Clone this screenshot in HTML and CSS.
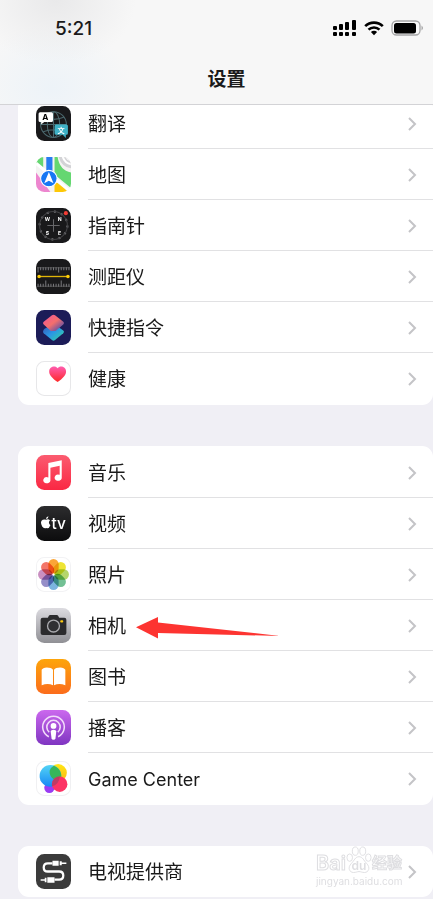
FILE: index.html
```html
<!DOCTYPE html>
<html lang="zh-CN">
<head>
<meta charset="utf-8">
<meta name="viewport" content="width=device-width, initial-scale=1">
<title>设置</title>
<link rel="stylesheet" href="styles.css">
</head>
<body>
<svg class="defs" aria-hidden="true">
  <defs>
    <linearGradient id="g-music" x2="0" y2="1"><stop stop-color="#fb5c70"/><stop offset="1" stop-color="#fa2743"/></linearGradient>
    <linearGradient id="g-dark" x2="0" y2="1"><stop stop-color="#2c2c2e"/><stop offset="1" stop-color="#0c0c0d"/></linearGradient>
    <linearGradient id="g-cam" x2="0" y2="1"><stop stop-color="#dcdbe0"/><stop offset="1" stop-color="#909095"/></linearGradient>
    <linearGradient id="g-books" x2="0" y2="1"><stop stop-color="#fda50b"/><stop offset="1" stop-color="#fb6c1c"/></linearGradient>
    <linearGradient id="g-pod" x2="0" y2="1"><stop stop-color="#cb68ee"/><stop offset="1" stop-color="#7f35c1"/></linearGradient>
    <linearGradient id="g-heart" x2="0" y2="1"><stop stop-color="#ff5cae"/><stop offset="1" stop-color="#fd2827"/></linearGradient>
    <linearGradient id="g-s1" x2="1" y2="1"><stop stop-color="#f2529d"/><stop offset=".5" stop-color="#f56f6c"/><stop offset=".75" stop-color="#8d5a94"/><stop offset="1" stop-color="#3d5fae"/></linearGradient>
    <linearGradient id="g-s2" x2="1" y2="1"><stop stop-color="#3a4fae"/><stop offset=".5" stop-color="#2a97e6"/><stop offset="1" stop-color="#35dc98"/></linearGradient>
    <linearGradient id="g-blue" x2="0" y2="1"><stop stop-color="#53d3f5"/><stop offset="1" stop-color="#1788f5"/></linearGradient>
    <linearGradient id="g-yellow" x2="0" y2="1"><stop stop-color="#ffe715"/><stop offset="1" stop-color="#fbb615"/></linearGradient>
    <clipPath id="tile"><rect width="34" height="34" rx="8"/></clipPath>
    <symbol id="chevron" viewBox="0 0 10 16"><path d="M2 2l6 6-6 6" fill="none" stroke="#c4c4c7" stroke-width="2"/></symbol>
  </defs>
</svg>

<header class="header">
  <div class="status">
    <time class="clock">5:21</time>
    <div class="indicators">
      <svg width="24" height="18" viewBox="0 0 24 18" role="img" aria-label="信号">
        <g fill="#000"><rect y="7" width="4" height="4" rx="1"/><rect x="6" y="5" width="4" height="6" rx="1"/><rect x="12" y="3" width="4" height="8" rx="1"/><rect x="19" y="1" width="4" height="10" rx="1"/><rect y="13" width="4" height="4" rx="1"/><rect x="6" y="13" width="4" height="4" rx="1"/><rect x="12" y="13" width="4" height="4" rx="1"/><rect x="19" y="13" width="4" height="4" rx="1"/></g>
      </svg>
      <svg width="20" height="18" viewBox="0 0 20 18" role="img" aria-label="无线网络">
        <g fill="none" stroke="#000" stroke-width="2.6"><path d="M1.2 7.2a12.5 12.5 0 0 1 17.6 0"/><path d="M4.5 10.7a7.8 7.8 0 0 1 11 0"/></g><path d="M6.9 13.1a4.4 4.4 0 0 1 6.2 0L10 16.3z"/>
      </svg>
      <svg width="33" height="18" viewBox="0 0 33 18" role="img" aria-label="电池">
        <rect x="1" y="2" width="28" height="14" rx="4.5" fill="#fafafa" stroke="#a5a5a6" stroke-width="1.3"/><rect x="3" y="4" width="22" height="10.5" rx="2.5"/><path d="M30.5 6.5q3 2.5 0 5z" fill="#a5a5a6"/>
      </svg>
    </div>
  </div>
  <h1 class="title">设置</h1>
</header>

<main class="settings">
  <section class="group group--first">
    <a class="row" href="#translate">
      <svg class="icon" viewBox="0 0 34 34"><g clip-path="url(#tile)"><rect width="34" height="34" fill="#19191b"/>
        <g fill="none" stroke="#4b686e"><circle cx="17" cy="18" r="12.5"/><ellipse cx="17" cy="18" rx="6" ry="12.5"/><path d="M17 5.500v25M4.500 18h25M7 11q10 4 20 0M7 25q10-4 20 0"/></g>
        <path d="M4 6h11q1.500 0 1.500 1.500V14q0 1.500-1.500 1.500H8L5 18v-2.500H4Q2.500 15.500 2.500 14V7.500Q2.500 6 4 6z" fill="#fff"/>
        <path d="M19.500 18h10q1.500 0 1.500 1.500v7q0 1.500-1.500 1.500H29v3l-3-3h-6.500Q18 28 18 26.500v-7q0-1.500 1.500-1.500z" fill="#3fb1c6"/>
        <text x="9" y="14" class="glyph-a">A</text><text x="24.500" y="26" class="glyph-w">文</text></g></svg>
      <span class="label">翻译</span><svg class="chevron"><use href="#chevron"/></svg></a>
    <a class="row" href="#maps">
      <svg class="icon" viewBox="0 0 34 34"><g clip-path="url(#tile)"><rect width="34" height="34" fill="#f4f3f2"/>
        <path d="M0 0h7v11L0 5z" fill="#65d771"/><path d="M18 0h3q2 13 13 15v15L18 17z" fill="#65d771"/>
        <path d="M22 0q3 10 12 11V0z" fill="#d3d3d6"/><path d="M26 0q2 6 8 7M30 0q1 3 4 3" fill="none" stroke="#fff" stroke-width="2"/>
        <path d="M0 15l14 19H0z" fill="#ed86cf"/><path d="M18 34v-8l5-2 8 10z" fill="#fdc807"/><path d="M0 6l34 28" stroke="#fff" stroke-width="3"/>
        <rect x="10" width="6" height="17" fill="#287cf1"/><circle cx="12.500" cy="21" r="8" fill="#1677f3" stroke="#fff"/><path d="M12.500 14.500l4.500 11-4.500-2.500L8 25.500z" fill="#fff"/></g></svg>
      <span class="label">地图</span><svg class="chevron"><use href="#chevron"/></svg></a>
    <a class="row" href="#compass">
      <svg class="icon" viewBox="0 0 34 34"><rect width="34" height="34" rx="8" fill="#19191b"/>
        <circle cx="17" cy="17" r="13.500" fill="none" stroke="#77777a" stroke-width="2" stroke-dasharray="2 5.070"/><circle cx="17" cy="17" r="13.500" fill="none" stroke="#424245"/>
        <path d="M17 11v12M11 17h12" stroke="#666669"/><circle cx="29" cy="5" r="2" fill="#f43d35"/>
        <g class="compass"><text x="11" y="13">W</text><text x="23" y="13">N</text><text x="11" y="26">S</text><text x="23" y="26">E</text></g></svg>
      <span class="label">指南针</span><svg class="chevron"><use href="#chevron"/></svg></a>
    <a class="row" href="#measure">
      <svg class="icon" viewBox="0 0 34 34"><rect width="34" height="34" rx="8" fill="#19191b"/>
        <path d="M1 8.500h32M1 26.500h32" stroke="#4d4d4f"/><path d="M2 8v5M4.500 8v3M7 8v3M9.500 8v3M12 8v3M14.500 8v3M17 8v3M19.500 8v3M22 8v5M24.500 8v3M27 8v3M29.500 8v3M32 8v3M2 27v-3M4.500 27v-3M7 27v-3M9.500 27v-6M12 27v-3M14.500 27v-3M17 27v-3M19.500 27v-3M22 27v-3M24.500 27v-6M27 27v-3M29.500 27v-3M32 27v-3" stroke="#77777a"/>
        <path d="M2 17h30" stroke="#dfb407" stroke-width="1.300"/><circle cx="3" cy="17" r="1.700" fill="#ffcf08"/><circle cx="31" cy="17" r="1.700" fill="#ffcf08"/></svg>
      <span class="label">测距仪</span><svg class="chevron"><use href="#chevron"/></svg></a>
    <a class="row" href="#shortcuts">
      <svg class="icon" viewBox="0 0 34 34"><rect width="34" height="34" rx="8" fill="#1c1c58"/>
        <path d="M8 18.500L17 13l9.500 7q1.500 1.300 0 2.600l-8 6.600q-1.500 1.200-3 0l-8-6.600q-1.500-1.300.5-4.100z" fill="url(#g-s2)"/>
        <path d="M15.500 5q1.500-1 3 0l8 6.500q1.500 1.300 0 2.600L19 20.300l-4.500 0-7-6.200q-1.500-1.300 0-2.600z" fill="url(#g-s1)"/></svg>
      <span class="label">快捷指令</span><svg class="chevron"><use href="#chevron"/></svg></a>
    <a class="row" href="#health">
      <svg class="icon" viewBox="0 0 34 34"><rect x=".5" y=".5" width="33" height="33" rx="7.500" fill="#fff" stroke="#e7e7e9"/>
        <path d="M21 20.500C16 17 12.800 14 12.800 10.300c0-5 6-6.200 8.200-3.300 2.200-2.900 8.200-1.700 8.200 3.300 0 3.700-3.200 6.700-8.200 10.200z" fill="url(#g-heart)"/></svg>
      <span class="label">健康</span><svg class="chevron"><use href="#chevron"/></svg></a>
  </section>

  <section class="group">
    <a class="row" href="#music">
      <svg class="icon" viewBox="0 0 34 34"><rect width="34" height="34" rx="8" fill="url(#g-music)"/>
        <path d="M12 7.700l13-2.600V22.500a3.500 3 0 1 1-2-3.200V10.500l-9 1.900V25a3.500 3 0 1 1-2-3.200z" fill="#fff"/></svg>
      <span class="label">音乐</span><svg class="chevron"><use href="#chevron"/></svg></a>
    <a class="row" href="#video">
      <svg class="icon" viewBox="0 0 34 34"><rect width="34" height="34" rx="8" fill="url(#g-dark)"/>
        <path d="M10 13.400q1.800-1 3.600.4-2.300 2.200.4 4.800-1.500 3.800-4 2.700-2.400 1-4-1.400-2.600-5 .6-6.500 1.600-.7 3.400 0zM9.700 12.800q0-2.500 2.400-2.900 0 2.300-2.400 2.900z" fill="#fff"/><text x="15" y="22" class="tv">tv</text></svg>
      <span class="label">视频</span><svg class="chevron"><use href="#chevron"/></svg></a>
    <a class="row" href="#photos">
      <svg class="icon" viewBox="0 0 34 34"><rect x=".5" y=".5" width="33" height="33" rx="7.500" fill="#fff" stroke="#f2f2f4"/>
        <g class="petals"><rect x="12" y="2" width="10" height="14" rx="5" fill="#fa9c22"/><rect x="12" y="2" width="10" height="14" rx="5" fill="#ede11d" transform="rotate(45 17 17)"/><rect x="12" y="2" width="10" height="14" rx="5" fill="#add25b" transform="rotate(90 17 17)"/><rect x="12" y="2" width="10" height="14" rx="5" fill="#62b988" transform="rotate(135 17 17)"/><rect x="12" y="2" width="10" height="14" rx="5" fill="#6eaddc" transform="rotate(180 17 17)"/><rect x="12" y="2" width="10" height="14" rx="5" fill="#8a82c2" transform="rotate(225 17 17)"/><rect x="12" y="2" width="10" height="14" rx="5" fill="#c383ba" transform="rotate(270 17 17)"/><rect x="12" y="2" width="10" height="14" rx="5" fill="#f26758" transform="rotate(315 17 17)"/></g></svg>
      <span class="label">照片</span><svg class="chevron"><use href="#chevron"/></svg></a>
    <a class="row" href="#camera">
      <svg class="icon" viewBox="0 0 34 34"><rect width="34" height="34" rx="8" fill="url(#g-cam)"/>
        <path d="M6.500 9.500h5l1-2q.4-.8 1.300-.8h6.400q.9 0 1.300.8l1 2h5q2 0 2 2v12.700q0 2-2 2h-21q-2 0-2-2V11.500q0-2 2-2z" fill="#2b2b2d"/>
        <circle cx="17" cy="17.500" r="5.800" fill="#303033" stroke="#aaaaae" stroke-width="1.300"/><rect x="23.500" y="12" width="3" height="2" rx="1" fill="#ffcc10"/></svg>
      <span class="label">相机</span>
      <svg class="pointer" viewBox="0 0 144 22" aria-hidden="true"><path d="M0 10.300L22 0v5.500L144 19 22 16v5.500z" fill="#fd3431"/></svg>
      <svg class="chevron"><use href="#chevron"/></svg></a>
    <a class="row" href="#books">
      <svg class="icon" viewBox="0 0 34 34"><rect width="34" height="34" rx="8" fill="url(#g-books)"/>
        <path d="M16.500 10.500v15q-5-2.500-11 0V10.500q1-2 5-2.300 4.500 0 6 2.300zM17.500 10.500v15q5-2.500 11 0V10.500q-1-2-5-2.300-4.500 0-6 2.300z" fill="#fff"/></svg>
      <span class="label">图书</span><svg class="chevron"><use href="#chevron"/></svg></a>
    <a class="row" href="#podcasts">
      <svg class="icon" viewBox="0 0 34 34"><rect width="34" height="34" rx="8" fill="url(#g-pod)"/>
        <g fill="none" stroke="#f2dcfa" stroke-width="1.500"><path d="M12.500 26a10.500 10.500 0 1 1 9 0M12.800 21.500a6.500 6.500 0 1 1 8.400 0"/></g><circle cx="17" cy="15.500" r="2.800" fill="#fff"/><path d="M14.300 21q0-1.800 2.700-1.800t2.700 1.800l-.8 6.500q-.2 1.500-1.900 1.500t-1.900-1.500z" fill="#fff"/></svg>
      <span class="label">播客</span><svg class="chevron"><use href="#chevron"/></svg></a>
    <a class="row" href="#gamecenter">
      <svg class="icon" viewBox="0 0 34 34"><rect x=".5" y=".5" width="33" height="33" rx="7.500" fill="#fff" stroke="#f0f0f2"/>
        <circle cx="13" cy="26" r="5" fill="#9a3cf3"/><circle cx="21.500" cy="11.500" r="8.500" fill="url(#g-yellow)"/><circle cx="14" cy="14.500" r="10.500" fill="url(#g-blue)"/>
        <path d="M13.300 9.200a8.500 8.500 0 0 0 10.300 9.500A10.500 10.500 0 0 0 17.300 4.500a8.500 8.500 0 0 0-4 4.700z" fill="#36b65b"/><circle cx="23" cy="22.500" r="7.500" fill="#fc3364"/><path d="M15.500 22.500a7.500 7.500 0 0 1 7.800-7.500q-1.300 8.500-7.800 9.600z" fill="#bd3b64"/></svg>
      <span class="label label--latin">Game Center</span><svg class="chevron"><use href="#chevron"/></svg></a>
  </section>

  <section class="group group--single">
    <a class="row" href="#tvprovider">
      <svg class="icon" viewBox="0 0 34 34"><rect width="34" height="34" rx="8" fill="#3b3b3b"/>
        <path d="M16 9h-4.500q-4 0-4 4t4 4h11q4 0 4 4t-4 4H18" fill="none" stroke="#fff" stroke-width="2.200"/>
        <path d="M16 6.500h6v5h-6zM23 7h2v4h-2zM25 8.300h4.500v1.400H25zM11 22.500h7v5.500h-7zM8.500 23h1.700v4.500H8.500zM4.500 24.500h4V26h-4z" fill="#fff"/></svg>
      <span class="label">电视提供商</span><svg class="chevron"><use href="#chevron"/></svg></a>
    <div class="watermark">
      <div class="watermark-brand"><span>Bai</span><svg class="paw" viewBox="0 0 28 30"><g fill="#fff" stroke="#dedee1"><ellipse cx="4" cy="13" rx="3" ry="4"/><ellipse cx="10" cy="6" rx="3.200" ry="4.500"/><ellipse cx="18" cy="6" rx="3.200" ry="4.500"/><ellipse cx="24" cy="13" rx="3" ry="4"/><path d="M14 12c4 0 5 4 8 7 5 5 2 10-2 10-3 0-4-1-6-1s-3 1-6 1c-4 0-7-5-2-10 3-3 4-7 8-7z"/></g><text x="14" y="26">du</text></svg><span class="watermark-cn">经验</span></div>
      <div class="watermark-url">jingyan.baidu.com</div>
    </div>
  </section>
</main>
</body>
</html>
```
FILE: styles.css
```css
* {
  box-sizing: border-box;
}

body {
  margin: 0;
  background: #f0eff5;
  color: #1a1a1a;
  font-family: Inter, "Noto Sans CJK SC", sans-serif;
  overflow-x: hidden;
}

.defs {
  position: absolute;
  width: 0;
  height: 0;
}

.header {
  position: sticky;
  top: 0;
  z-index: 2;
  height: 105px;
  padding-top: 16px;
  border-bottom: 1px solid #d3d3d6;
  background:
    radial-gradient(ellipse 80px 64px at 56px 0, #e9e9ea, transparent),
    radial-gradient(ellipse 80px 64px at 52px 88px, #edf3f8, transparent),
    #f7f7f7;
}

.status {
  display: flex;
  align-items: center;
  justify-content: space-between;
  height: 24px;
  padding: 0 9px 0 55px;
}

.clock {
  font-size: 19px;
  font-weight: 500;
}

.indicators {
  display: flex;
  gap: 7px;
}

.title {
  margin: 26px 0 0;
  padding-left: 20px;
  font-size: 19px;
  line-height: 28px;
  font-weight: 700;
  text-align: center;
}

.settings {
  display: flex;
  flex-direction: column;
  gap: 41px;
  margin-top: -8px;
}

.group {
  position: relative;
  margin-left: 18px;
  padding: 1px 0;
  border-radius: 11px;
  background: #fff;
}

.group--single {
  padding: 0;
  margin-bottom: 2px;
}

.row {
  display: flex;
  align-items: center;
  height: 51px;
  padding: 0 16px 0 18px;
  color: inherit;
  text-decoration: none;
  background: linear-gradient(#e1e1e3, #e1e1e3) 70px 100% / 100% 1px no-repeat;
}

.row:last-of-type {
  background: none;
}

.icon {
  width: 35px;
  height: 35px;
  flex: none;
}

.label {
  margin-left: 17px;
  padding-top: 2px;
  font-size: 19px;
  line-height: 26px;
}

.label--latin {
  font-size: 18px;
}

.chevron {
  width: 10px;
  height: 16px;
  margin-left: auto;
}

.pointer {
  width: 144px;
  height: 22px;
  margin: 4px 0 0 10px;
}

.glyph-a,
.glyph-w,
.compass {
  text-anchor: middle;
  font-weight: 700;
}

.glyph-a {
  font-size: 8px;
}

.glyph-w {
  font-size: 7px;
  fill: #fff;
}

.compass {
  font-size: 5px;
  fill: #fff;
}

.tv {
  font-size: 15px;
  font-weight: 500;
  fill: #fff;
}

.petals {
  mix-blend-mode: multiply;
}

.petals rect {
  mix-blend-mode: multiply;
  opacity: 0.9;
}

.watermark {
  position: absolute;
  right: 27px;
  bottom: 9px;
  width: 90px;
}

.watermark-brand {
  display: flex;
  align-items: flex-end;
  color: #fff;
  font-size: 20px;
  line-height: 22px;
  font-weight: 600;
  -webkit-text-stroke: 1px #dedee1;
}

.watermark-cn {
  font-size: 15px;
}

.paw {
  width: 26px;
  height: 29px;
  flex: none;
}

.paw text {
  font-size: 13px;
  text-anchor: middle;
  fill: #dedee1;
  stroke: none;
}

.watermark-url {
  color: #dedee1;
  font-size: 10px;
  line-height: 14px;
}
```
